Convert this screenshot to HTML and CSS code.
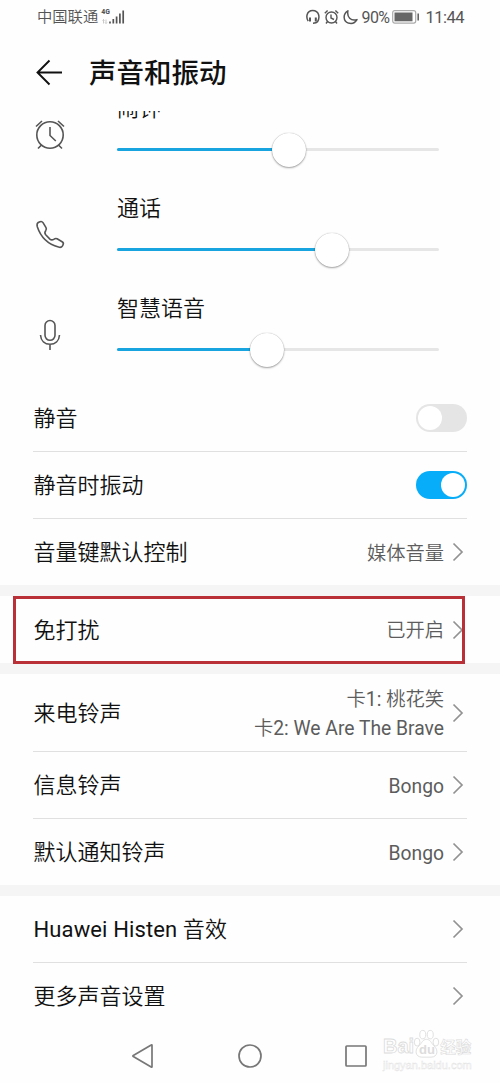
FILE: index.html
```html
<!DOCTYPE html>
<html lang="zh-CN">
<head>
<meta charset="utf-8">
<title>声音和振动</title>
<link rel="stylesheet" href="styles.css">
</head>
<body>
<div class="screen">
  <div class="status">
    <span class="carrier">中国联通</span>
    <div class="network"><span class="gen">4G</span>
      <svg width="24" height="18" viewBox="0 0 24 18"><path d="M2.500 15.500v-4m-1 1 1-1 1 1M5 11.500v4m-1-1 1 1 1-1" fill="none" stroke="#bbb" stroke-width=".8"/><path d="M9 13.500v2M12.300 11v4.500M15.600 8.500v7M18.900 5.500v10M22.200 2.500v13" stroke="#555" stroke-width="1.700"/></svg>
    </div>
    <div class="indicators">
      <svg width="14" height="16" viewBox="0 0 14 16" fill="none" stroke="#555" stroke-width="1.500"><path d="M2.200 12.200C-.2 8.500.4 1.600 6.700 1.500c6.500 0 7.500 7 4.800 11.300-.7 1-2.500 1.400-4.500 1.400"/><path d="M4 8.500v4M9.800 8.500v4" stroke-width="2"/></svg>
      <svg width="15" height="16" viewBox="0 0 15 16" fill="none" stroke="#555" stroke-width="1.400"><circle cx="7.500" cy="8.500" r="5.500"/><path d="M7 5.500V9l3 1.500M.8 4.200 3.600 1.400M14.200 4.200 11.400 1.400M3.500 12.500 2 14.500M11.500 12.500l1.500 2"/></svg>
      <svg width="15" height="16" viewBox="0 0 15 16" fill="none" stroke="#555" stroke-width="1.500" stroke-linejoin="round"><path d="M4.900 1.800C-.5 5 .2 12.300 5.300 14c3.600 1.100 7-.5 8.700-3.400C7.800 12.500 3.700 8 4.900 1.800Z"/></svg>
      <span class="percent">90%</span>
      <svg class="battery" width="28" height="14" viewBox="0 0 28 14"><rect x=".7" y=".7" width="23" height="12.400" rx="2" fill="#fff" stroke="#aaa" stroke-width="1.200"/><rect x="2.500" y="2.500" width="18" height="8.800" fill="#666"/><path d="M26.200 3.500v7" stroke="#666" stroke-width="1.600"/></svg>
      <span class="clock">11:44</span>
    </div>
  </div>

  <div class="header">
    <svg width="28" height="28" viewBox="0 0 28 28" fill="none" stroke="#111" stroke-width="1.900"><path d="M26 13.500H1.500M13.500 1.500 1.500 13.500l12 12"/></svg>
    <h1 class="title">声音和振动</h1>
  </div>

  <div class="volumes">
    <div class="volume first">
      <svg class="volume-icon" width="32" height="32" viewBox="0 0 32 32" fill="none" stroke="#555" stroke-width="1.600"><circle cx="16" cy="16" r="13.200"/><path d="M16 8v8.500l5.800 5.500M2 7.500 8 2M24 2l6 5.500M7.500 26 4 29.500M24.500 26l3.500 3.500"/></svg>
      <div class="volume-body"><div class="label">闹钟</div><div class="track"><div class="fill" style="width:171.500px"></div><div class="thumb"></div></div></div>
    </div>
    <div class="volume">
      <svg class="volume-icon" width="32" height="32" viewBox="0 0 32 32" fill="none" stroke="#555" stroke-width="1.600" stroke-linejoin="round"><path d="M4.200 3.500 6 2.700c1.200-.5 2.300-.1 3 .9l3 5c.6 1.100.5 1.800-.2 2.800-1.300 1.700-1.400 2.800-.1 4.300l4.200 4.400c1.400 1.300 2.500 1.200 4.200 0 1-.8 1.900-.9 3-.3l5 2.900c1.300.8 1.600 1.800 1 3l-.6 1.200c-.8 1.400-2.200 1.700-4 1.200C14.500 25.300 6.800 18.300 3.300 7.700c-.5-1.800-.4-3.300.9-4.200Z"/></svg>
      <div class="volume-body"><div class="label">通话</div><div class="track"><div class="fill" style="width:215px"></div><div class="thumb"></div></div></div>
    </div>
    <div class="volume">
      <svg class="volume-icon" width="32" height="32" viewBox="0 0 32 32" fill="none" stroke="#555" stroke-width="1.600"><rect x="11" y="1.500" width="10" height="19.800" rx="5"/><path d="M6.500 16c.4 6 4.400 9.300 9.500 9.300s9.100-3.300 9.500-9.300M16 25.300V31"/></svg>
      <div class="volume-body"><div class="label">智慧语音</div><div class="track"><div class="fill" style="width:150px"></div><div class="thumb"></div></div></div>
    </div>
  </div>

  <div class="group">
    <div class="row"><span class="label">静音</span><span class="switch"></span></div>
    <div class="row"><span class="label">静音时振动</span><span class="switch on"></span></div>
    <div class="row"><span class="label">音量键默认控制</span><span class="value">媒体音量</span><svg class="chevron" viewBox="0 0 12 20"><path d="m1.500 1.500 8.500 8.500-8.500 8.500"/></svg></div>
  </div>
  <div class="group dnd">
    <div class="row"><span class="label">免打扰</span><span class="value">已开启</span><svg class="chevron" viewBox="0 0 12 20"><path d="m1.500 1.500 8.500 8.500-8.500 8.500"/></svg></div>
    <div class="highlight"></div>
  </div>
  <div class="group">
    <div class="row tall"><span class="label">来电铃声</span><span class="value">卡1: 桃花笑<br>卡2: We Are The Brave</span><svg class="chevron" viewBox="0 0 12 20"><path d="m1.500 1.500 8.500 8.500-8.500 8.500"/></svg></div>
    <div class="row"><span class="label">信息铃声</span><span class="value">Bongo</span><svg class="chevron" viewBox="0 0 12 20"><path d="m1.500 1.500 8.500 8.500-8.500 8.500"/></svg></div>
    <div class="row"><span class="label">默认通知铃声</span><span class="value">Bongo</span><svg class="chevron" viewBox="0 0 12 20"><path d="m1.500 1.500 8.500 8.500-8.500 8.500"/></svg></div>
  </div>
  <div class="group">
    <div class="row"><span class="label latin">Huawei Histen 音效</span><svg class="chevron" viewBox="0 0 12 20"><path d="m1.500 1.500 8.500 8.500-8.500 8.500"/></svg></div>
    <div class="row"><span class="label">更多声音设置</span><svg class="chevron" viewBox="0 0 12 20"><path d="m1.500 1.500 8.500 8.500-8.500 8.500"/></svg></div>
  </div>

  <div class="nav">
    <svg width="24" height="26" viewBox="0 0 24 26"><path d="M21 2.300v21.400q0 .8-.8.300L2.300 13.500q-.8-.5 0-1L20.200 2q.8-.5.800.3Z"/></svg>
    <svg width="24" height="26" viewBox="0 0 24 26"><circle cx="12" cy="13" r="11"/></svg>
    <svg width="24" height="26" viewBox="0 0 24 26"><rect x="2" y="3" width="20" height="20" rx=".8"/></svg>
  </div>
  <div class="watermark">
    <div class="brand"><span class="bai">Bai</span>
      <svg class="paw" width="27" height="30" viewBox="0 0 28 32"><ellipse cx="4" cy="14" rx="3" ry="4.200"/><ellipse cx="10" cy="6" rx="3.200" ry="4.500"/><ellipse cx="18" cy="6" rx="3.200" ry="4.500"/><ellipse cx="24" cy="14" rx="3" ry="4.200"/><path d="M14 11c4 0 5 4 8 7 5 4 4 12-3 12H9c-7 0-8-8-3-12 3-3 4-7 8-7Z"/><text x="6" y="27">du</text></svg>
      <span class="jingyan">经验</span>
    </div>
    <div class="site">jingyan.baidu.com</div>
  </div>
</div>
</body>
</html>
```

FILE: styles.css
```css
* { box-sizing: border-box; }
body { margin: 0; background: #fefefe; }
svg { display: block; flex: none; }

.screen {
  position: relative;
  width: 500px;
  height: 1083px;
  overflow: hidden;
  font-family: Roboto, "Noto Sans CJK SC DemiLight", "Noto Sans CJK SC", sans-serif;
  color: #111;
}

.status {
  display: flex;
  align-items: center;
  height: 34px;
  padding: 0 36px 0 37px;
  color: #555;
}
.carrier { padding-top: 1px; font-size: 15.3px; line-height: 33px; }
.network { position: relative; margin-left: 3px; }
.gen {
  position: absolute;
  left: 0;
  top: 0;
  font: 700 8px/8px "Roboto Condensed", Roboto, sans-serif;
}
.indicators { display: flex; align-items: center; margin-left: auto; }
.indicators svg { margin-right: 4px; }
.percent { font-size: 16px; margin-right: 3px; letter-spacing: -.6px; }
.clock { font-size: 16.5px; letter-spacing: -.5px; }
.status .battery { margin-right: 5px; }

.header {
  display: flex;
  align-items: center;
  height: 77px;
  padding: 0 35px 0 36px;
}
.title {
  margin: 2px 0 0 25px;
  font-family: Roboto, "Noto Sans CJK SC", sans-serif;
  font-size: 27.5px;
  line-height: 40px;
  font-weight: 500;
}

.volumes { height: 274px; overflow: hidden; }
.volume { display: flex; height: 100px; padding: 0 61px 0 34px; }
.volume.first { margin-top: -21px; }
.volume-icon { margin: 29px 51px 0 0; }
.volume-body { flex: 1; }
.label { padding-top: 2px; font-size: 22px; line-height: 34px; }
.label.latin { letter-spacing: .12px; }
.volume .label { height: 36px; }
.track {
  display: flex;
  align-items: center;
  height: 3px;
  margin-top: 22px;
  border-radius: 2px;
  background: #e6e6e6;
}
.fill { height: 3px; border-radius: 2px; background: #18a4df; }
.thumb {
  flex: none;
  width: 34px;
  height: 34px;
  margin-left: -17px;
  border-radius: 50%;
  background: #fff;
  box-shadow: 0 0 1px rgba(0, 0, 0, .3), 0 1px 2px rgba(0, 0, 0, .35);
}

.group + .group { border-top: 11px solid #f5f5f5; }
.row {
  display: flex;
  align-items: center;
  height: 66px;
  margin: 0 33px;
}
.row + .row { height: 67px; border-top: 1px solid #e0e0e0; }
.row.tall { height: 77px; }
.row .label { margin-right: auto; padding-left: .5px; }
.value {
  padding-top: 2px;
  font-size: 19.3px;
  line-height: 29px;
  text-align: right;
  color: #5c5c5c;
}
.chevron {
  width: 12px;
  height: 20px;
  margin: 0 3px 0 8px;
  fill: none;
  stroke: #929292;
  stroke-width: 1.7;
}
.switch {
  width: 51px;
  height: 28px;
  padding: 2px;
  border-radius: 14px;
  background: #e5e5e5;
}
.switch::before {
  content: "";
  display: block;
  width: 24px;
  height: 24px;
  border-radius: 50%;
  background: #fff;
}
.switch.on { background: #07adf8; }
.switch.on::before { margin-left: auto; }

.dnd { position: relative; }
.dnd .row { height: 67px; }
.highlight {
  position: absolute;
  left: 13px;
  top: 0;
  width: 452px;
  height: 68px;
  border: 3px solid #b93037;
}

.nav {
  display: flex;
  justify-content: space-between;
  height: 54px;
  padding: 14px 132px 0 131px;
}
.nav svg { fill: none; stroke: #777; stroke-width: 1.7; }

.watermark {
  position: absolute;
  left: 383px;
  top: 1029px;
  width: 95px;
  color: #fff;
  -webkit-text-stroke: .8px #dcdcdc;
}
.brand { display: flex; align-items: flex-end; height: 30px; }
.bai { font: 700 20px/26px "Liberation Sans", sans-serif; }
.paw { margin-left: -1px; fill: #fff; stroke: #dedede; stroke-width: 1; }
.paw text { font: 700 14px "Liberation Sans", sans-serif; -webkit-text-stroke: 0; fill: #dcdcdc; stroke: none; }
.jingyan { font: 700 15.5px/25px "Noto Sans CJK SC", sans-serif; -webkit-text-stroke: .6px #dcdcdc; }
.site { font: 11px/13px "Liberation Sans", sans-serif; -webkit-text-stroke: .4px #e2e2e2; }
```
